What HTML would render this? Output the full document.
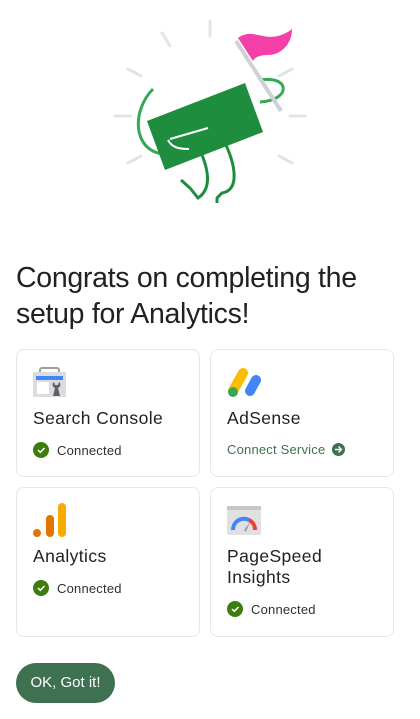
<!DOCTYPE html>
<html><head><style>
*{margin:0;padding:0;box-sizing:border-box}
body{width:420px;height:719px;background:#fff;font-family:"Liberation Sans",sans-serif;color:#161b18;position:relative;overflow:hidden}
h1{position:absolute;left:16px;top:260px;font-size:28.5px;font-weight:400;line-height:36px;letter-spacing:-0.3px;width:390px;color:#202124}
.card{position:absolute;border:1px solid #e6e6e6;border-radius:8px;background:#fff}
.card .t{position:absolute;left:16px;font-size:17.5px;letter-spacing:0.4px;line-height:21px;color:#202124}
.st{position:absolute;left:16px;font-size:13px;display:flex;align-items:center;letter-spacing:0.2px;color:#303030}
.ck{width:16px;height:16px;border-radius:50%;background:#3c7d0e;margin-right:8px;display:flex;align-items:center;justify-content:center}
.btn{position:absolute;left:16px;top:663px;width:99px;height:40px;border-radius:20px;background:#3e7150;color:#fff;font-size:15px;line-height:40px;text-align:center}
</style></head><body>
<svg width="420" height="240" style="position:absolute;left:0;top:0">
<g stroke="#e3e4e6" stroke-width="3" stroke-linecap="round">
<line x1="210" y1="21" x2="210" y2="36"/><line x1="162" y1="33" x2="170" y2="46"/>
<line x1="128" y1="69" x2="141" y2="76"/><line x1="115" y1="116" x2="131" y2="116"/>
<line x1="128" y1="163" x2="141" y2="156"/><line x1="279" y1="76" x2="292" y2="69"/>
<line x1="290" y1="116" x2="305" y2="116"/><line x1="279" y1="156" x2="292" y2="163"/>
</g>
<path d="M153 89 C132 110 132 150 163 154" stroke="#34a853" stroke-width="3" fill="none"/>
<path d="M260 80 C290 75 292 100 260 102" stroke="#34a853" stroke-width="3" fill="none"/>
<path d="M202 155 C210 175 210 190 198 198 L190 188 L181 180 M226 145 C235 165 240 190 222 193 L217 198 L217 203" stroke="#1e8e3e" stroke-width="3" fill="none"/>
<polygon points="147,121 245,83 263,132 165,170" fill="#1e8e3e"/>
<path d="M208 128 L170 139 M168 140 C172 148 180 149 189 149" stroke="#fff" stroke-width="2" fill="none"/>
<line x1="236" y1="41" x2="281" y2="111" stroke="#d0d1d4" stroke-width="4"/>
<path d="M238 38 C252 28 262 40 278 36 C285 34 290 31 292 29 C292 45 280 55 268 55 C260 55 255 57 253 61 Z" fill="#f43fa8"/>
</svg>
<h1>Congrats on completing the setup for Analytics!</h1>

<div class="card" style="left:16px;top:349px;width:184px;height:128px">
<svg width="33" height="30" style="position:absolute;left:16px;top:17px"><rect x="7" y="1" width="19" height="6" rx="2" fill="none" stroke="#9e9e9e" stroke-width="2"/><rect x="0" y="5" width="33" height="25" fill="#dadce0"/><rect x="3" y="9" width="27" height="4" fill="#4285f4"/><rect x="4" y="15" width="12" height="12" fill="#fff"/><path d="M20 29 L22 21 C19 20 19 16 21 15 L22 18 L25 18 L26 15 C28 16 28 20 25 21 L27 29Z" fill="#616161"/></svg>
<div class="t" style="top:58px">Search Console</div>
<div class="st" style="top:92px"><div class="ck"><svg width="10" height="10"><path d="M2 5 L4.3 7.3 L8.5 3" stroke="#fff" stroke-width="1.5" fill="none"/></svg></div>Connected</div>
</div>

<div class="card" style="left:210px;top:349px;width:184px;height:128px">
<svg width="36" height="32" style="position:absolute;left:16px;top:17px"><line x1="6" y1="24" x2="16" y2="6" stroke="#fbbc04" stroke-width="10" stroke-linecap="round"/><line x1="23" y1="24" x2="29" y2="13" stroke="#4285f4" stroke-width="10" stroke-linecap="round"/><circle cx="6" cy="25" r="5" fill="#34a853"/></svg>
<div class="t" style="top:58px">AdSense</div>
<div class="st" style="top:92px;color:#3e7150">Connect Service<div style="width:13px;height:13px;border-radius:50%;background:#3e7150;margin-left:7px;display:flex;align-items:center;justify-content:center"><svg width="9" height="9"><path d="M1 4.5 H7.5 M4.5 1.5 L7.5 4.5 L4.5 7.5" stroke="#fff" stroke-width="1.4" fill="none"/></svg></div></div>
</div>

<div class="card" style="left:16px;top:487px;width:184px;height:150px">
<svg width="34" height="34" style="position:absolute;left:16px;top:15px"><rect x="25" y="0" width="8" height="34" rx="4" fill="#f9ab00"/><rect x="13" y="12" width="8" height="22" rx="4" fill="#e37400"/><circle cx="4" cy="30" r="4" fill="#e37400"/></svg>
<div class="t" style="top:58px">Analytics</div>
<div class="st" style="top:92px"><div class="ck"><svg width="10" height="10"><path d="M2 5 L4.3 7.3 L8.5 3" stroke="#fff" stroke-width="1.5" fill="none"/></svg></div>Connected</div>
</div>

<div class="card" style="left:210px;top:487px;width:184px;height:150px">
<svg width="34" height="30" style="position:absolute;left:16px;top:18px"><rect width="34" height="29" rx="2" fill="#e0e0e0"/><rect width="34" height="4" fill="#c6c6c6"/><path d="M6 24 A11 11 0 0 1 22 14" stroke="#4285f4" stroke-width="4" fill="none"/><path d="M22 14 A11 11 0 0 1 28 24" stroke="#ea4335" stroke-width="4" fill="none"/><path d="M17 24 L23 16 L19 26Z" fill="#9e9e9e"/></svg>
<div class="t" style="top:58px">PageSpeed<br>Insights</div>
<div class="st" style="top:113px"><div class="ck"><svg width="10" height="10"><path d="M2 5 L4.3 7.3 L8.5 3" stroke="#fff" stroke-width="1.5" fill="none"/></svg></div>Connected</div>
</div>

<div class="btn">OK, Got it!</div>
</body></html>
